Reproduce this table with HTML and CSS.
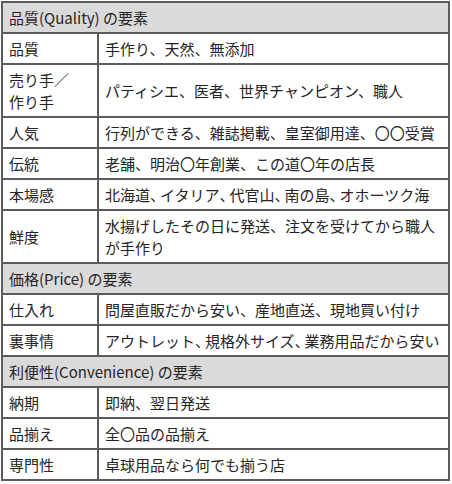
FILE: index.html
```html
<!DOCTYPE html>
<html lang="ja">
<head>
<meta charset="utf-8">
<link rel="stylesheet" href="styles.css">
</head>
<body>
<table class="elements">
  <colgroup><col class="c-key"><col class="c-val"></colgroup>
  <tr class="section"><th colspan="2">品質(Quality) の要素</th></tr>
  <tr><td>品質</td><td>手作り、天然、無添加</td></tr>
  <tr class="tall"><td>売り手／<br>作り手</td><td>パティシエ、医者、世界チャンピオン、職人</td></tr>
  <tr><td>人気</td><td>行列ができる、雑誌掲載、皇室御用達、〇〇受賞</td></tr>
  <tr><td>伝統</td><td>老舗、明治〇年創業、この道〇年の店長</td></tr>
  <tr><td>本場感</td><td class="tight">北海道<span class="c">、</span>イタリア<span class="c">、</span>代官山<span class="c">、</span>南の島<span class="c">、</span>オホーツク海</td></tr>
  <tr class="tall"><td>鮮度</td><td>水揚げしたその日に発送、注文を受けてから職人が手作り</td></tr>
  <tr class="section"><th colspan="2">価格(Price) の要素</th></tr>
  <tr><td>仕入れ</td><td>問屋直販だから安い、産地直送、現地買い付け</td></tr>
  <tr><td>裏事情</td><td class="tight">アウトレット<span class="c">、</span>規格外サイズ<span class="c">、</span>業務用品だから安い</td></tr>
  <tr class="section"><th colspan="2">利便性(Convenience) の要素</th></tr>
  <tr><td>納期</td><td>即納、翌日発送</td></tr>
  <tr><td>品揃え</td><td>全〇品の品揃え</td></tr>
  <tr><td>専門性</td><td>卓球用品なら何でも揃う店</td></tr>
</table>
</body>
</html>
```
FILE: styles.css
```css
html, body {
  margin: 0;
  padding: 0;
  background: #ffffff;
}
body {
  padding: 1px 2px 0 1px;
  font-family: "Noto Sans CJK JP", "Noto Sans", sans-serif;
  font-size: 15px;
  color: #262324;
}
.elements {
  width: 449px;
  border-collapse: collapse;
  table-layout: fixed;
}
.c-key { width: 96px; }
.elements td,
.elements th {
  border: 2px solid #5c5c5c;
  padding: 4px 3px 3px 6px;
  line-height: 22px;
  text-align: left;
  vertical-align: middle;
  font-weight: normal;
}
.elements .tight {
  white-space: nowrap;
}
.elements .c {
  letter-spacing: -5px;
}
.elements .section th {
  background: #d9dad9;
  padding-top: 4px;
  padding-bottom: 3px;
}
```
